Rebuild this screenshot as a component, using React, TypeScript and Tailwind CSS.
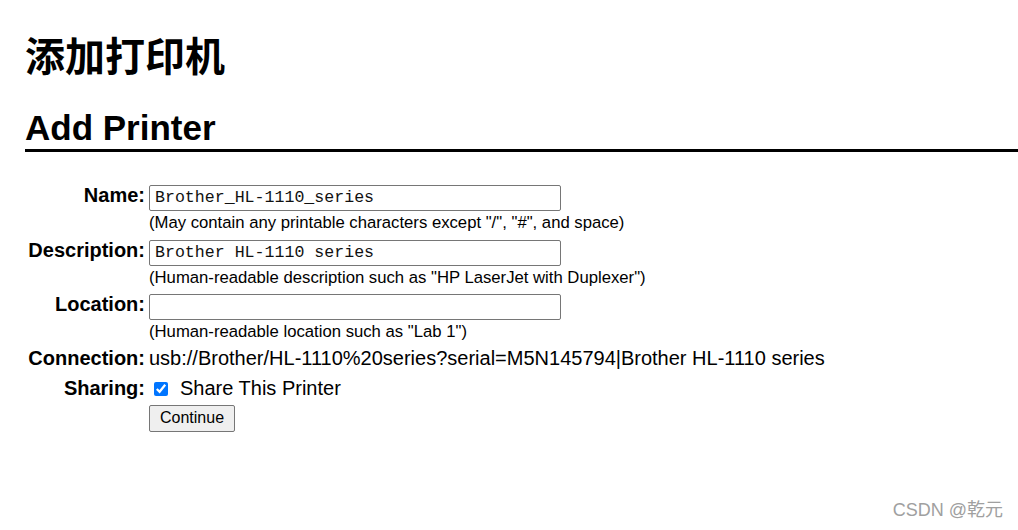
import React from "react";

type Row = { label: string; kind: "input" | "text" | "check" | "button"; value?: string; help?: string; pb?: string };

const ROWS: Row[] = [
  { label: "Name:", kind: "input", value: "Brother_HL-1110_series", help: '(May contain any printable characters except "/", "#", and space)', pb: "pb-[5px]" },
  { label: "Description:", kind: "input", value: "Brother HL-1110 series", help: '(Human-readable description such as "HP LaserJet with Duplexer")', pb: "pb-[4px]" },
  { label: "Location:", kind: "input", value: "", help: '(Human-readable location such as "Lab 1")', pb: "pb-[4px]" },
  { label: "Connection:", kind: "text", value: "usb://Brother/HL-1110%20series?serial=M5N145794|Brother HL-1110 series", pb: "pb-[7px]" },
  { label: "Sharing:", kind: "check", value: "Share This Printer", pb: "pb-[1px]" },
  { label: "", kind: "button", value: "Continue" },
];

export default function App() {
  return (
    <div className="relative w-[1018px] h-[530px] overflow-hidden bg-white text-black font-['Liberation_Sans',Arial,sans-serif]">
      <div className="pl-[25px] pt-[34px]">
        {/* Page title */}
        <h1 className="text-[40px] leading-none font-bold font-['Noto_Sans_CJK_SC','Liberation_Sans',sans-serif]">
          添加打印机
        </h1>
        <h2 className="mt-[36px] text-[35px] leading-none font-bold pb-[4px] border-b-[3px] border-black">
          Add Printer
        </h2>

        {/* Form */}
        <div className="mt-[32px] grid grid-cols-[120px_1fr] gap-x-[4px] text-[20px]">
          {ROWS.map((row, i) => (
            <React.Fragment key={i}>
              <div className={`text-right font-bold leading-[23px] ${row.pb ?? ""}`}>{row.label}</div>
              <div className={row.pb}>
                {row.kind === "input" && (
                  <>
                    <div className="mt-[1px] w-[412px] h-[26px] border border-[#767676] rounded-[2px] px-[5px] flex items-center font-['Liberation_Mono','Courier_New',monospace] text-[16.6px] text-[#111]">
                      {row.value}
                    </div>
                    <div className="text-[16.7px] leading-[23px]">{row.help}</div>
                  </>
                )}
                {row.kind === "text" && <div className="leading-[23px]">{row.value}</div>}
                {row.kind === "check" && (
                  <div className="flex items-center leading-[23px]">
                    <input type="checkbox" checked readOnly className="ml-[5px] w-[14px] h-[14px] accent-[#0075ff]" />
                    <span className="ml-[12px]">{row.value}</span>
                  </div>
                )}
                {row.kind === "button" && (
                  <button className="h-[27px] px-[10px] bg-[#efefef] border border-[#767676] rounded-[2px] text-[16px] leading-none">
                    {row.value}
                  </button>
                )}
              </div>
            </React.Fragment>
          ))}
        </div>
      </div>

      <div className="absolute right-[15px] bottom-[6px] text-[18px] text-[#a0a0a0] font-['Liberation_Sans','Noto_Sans_CJK_SC',sans-serif]">
        CSDN @乾元
      </div>
    </div>
  );
}
